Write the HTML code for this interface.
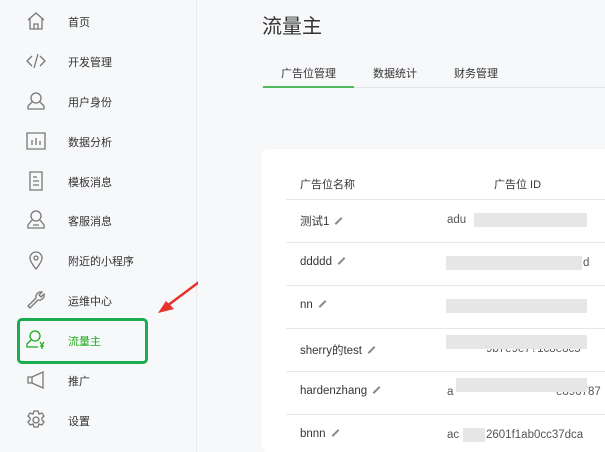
<!DOCTYPE html>
<html><head><meta charset="utf-8"><style>
*{margin:0;padding:0;box-sizing:border-box}
html,body{width:605px;height:452px;overflow:hidden}
body{background:#f7f8fa;font-family:"Liberation Sans","Noto Sans CJK SC",sans-serif;position:relative;color:#353535}
.side{position:absolute;left:0;top:0;width:197px;height:452px;background:#f7f8fa;border-right:1px solid #e9eaec}
.it{position:absolute;left:0;height:20px;width:190px;font-size:11px;color:#333}
.it svg{position:absolute;left:26px;top:0;width:20px;height:20px;fill:none;stroke:#777;stroke-width:1.3}
.it span{position:absolute;left:68px;top:3px}
.box{position:absolute;left:17px;top:318px;width:131px;height:46px;border:3px solid #1aad4f;border-radius:5px}
.main{position:absolute;left:198px;top:0;width:407px;height:452px;background:#f7f8fa;overflow:hidden}
h1{position:absolute;left:64px;top:10px;font-size:20px;font-weight:normal;color:#333}
.tabs{position:absolute;left:64px;top:86px;width:360px;border-bottom:1px solid #e4e6e8;height:2px}
.tab{position:absolute;top:65px;font-size:11px;color:#353535}
.ul{position:absolute;left:65px;top:86px;width:91px;height:2px;background:#52b95e}
.card{position:absolute;left:64px;top:149px;width:360px;height:303px;background:#fff;border-radius:5px}
.row{position:absolute;left:24px;width:320px;border-top:1px solid #e7e7e7;height:43px}
.row .n{position:absolute;left:14px;top:13px;font-size:11.5px;color:#353535}
.row .i{position:absolute;left:161px;top:14px;font-size:11.5px;color:#555}
.bl{position:absolute;top:13px;height:14px;background:#e6e6e6}
.pen{display:inline-block;width:9px;height:2px;background:#888;transform:rotate(-45deg);margin-left:5px;vertical-align:3px}
</style></head><body>
<div class="side">
<div class="it" style="top:11px"><svg viewBox="0 0 20 20"><path d="M2 9L10 2l8 7M4 7v11h12V7M8 18v-5h4v5"/></svg><span>首页</span></div>
<div class="it" style="top:51px"><svg viewBox="0 0 20 20"><path d="M6 5L1 10l5 5M14 5l5 5-5 5M12 3L8 17"/></svg><span>开发管理</span></div>
<div class="it" style="top:91px"><svg viewBox="0 0 20 20"><circle cx="10" cy="7" r="5"/><path d="M6 11L2 15v3h16v-3l-4-4"/></svg><span>用户身份</span></div>
<div class="it" style="top:131px"><svg viewBox="0 0 20 20"><path d="M1 2h18v16H1zM6 14V9M10 14V7M14 14v-4"/></svg><span>数据分析</span></div>
<div class="it" style="top:171px"><svg viewBox="0 0 20 20"><path d="M4 1h12v18H4zM7 6h4M7 10h6M7 14h6"/></svg><span>模板消息</span></div>
<div class="it" style="top:210px"><svg viewBox="0 0 20 20"><circle cx="10" cy="6" r="5"/><path d="M6 10L2 15v3h16v-3l-4-5M7 15h6"/></svg><span>客服消息</span></div>
<div class="it" style="top:250px"><svg viewBox="0 0 20 20"><path d="M10 19s-6-7-6-11a6 6 0 0112 0c0 4-6 11-6 11z"/><circle cx="10" cy="8" r="2"/></svg><span>附近的小程序</span></div>
<div class="it" style="top:290px"><svg viewBox="0 0 20 20"><path d="M2 16l8-8a5 5 0 016-6l-3 3 2 2 3-3a5 5 0 01-6 6l-8 8z"/></svg><span>运维中心</span></div>
<div class="it" style="top:330px"><svg viewBox="0 0 20 20" style="stroke:#1aad19"><circle cx="9" cy="6" r="5"/><path d="M5 10L1 14v3h11M14 12l2 3 2-3M16 15v4M14 16h4"/></svg><span style="color:#1aad19">流量主</span></div>
<div class="it" style="top:370px"><svg viewBox="0 0 20 20"><path d="M2 7h4l11-5v16L6 13H2zM6 7v6"/></svg><span>推广</span></div>
<div class="it" style="top:410px"><svg viewBox="0 0 20 20"><circle cx="10" cy="10" r="3"/><path d="M8 1h4l1 3 3-1 2 3-2 2 0 2 2 2-2 3-3-1-1 3H8l-1-3-3 1-2-3 2-2V8L2 6l2-3 3 1z"/></svg><span>设置</span></div>
<div class="box"></div>
</div>
<svg style="position:absolute;left:150px;top:275px" width="60" height="45"><path d="M53 4L13 34" stroke="#e8312a" stroke-width="2.5"/><path d="M8 38l16-4-8-8z" fill="#e8312a"/></svg>
<div class="main">
<h1>流量主</h1>
<div class="tabs"></div><div class="ul"></div>
<div class="tab" style="left:83px">广告位管理</div>
<div class="tab" style="left:175px">数据统计</div>
<div class="tab" style="left:256px">财务管理</div>
<div class="card">
<div style="position:absolute;left:38px;top:27px;font-size:11px">广告位名称</div>
<div style="position:absolute;left:232px;top:27px;font-size:11px">广告位 ID</div>
<div class="row" style="top:50px"><span class="n">测试1<i class="pen"></i></span><span class="i">adu</span><div class="bl" style="left:188px;width:113px"></div></div>
<div class="row" style="top:93px"><div class="bl" style="left:160px;width:136px"></div><span class="n">ddddd<i class="pen"></i></span><span class="i" style="left:297px">d</span></div>
<div class="row" style="top:136px"><span class="n">nn<i class="pen"></i></span><div class="bl" style="left:160px;width:141px"></div></div>
<div class="row" style="top:179px"><span class="n">sherry的test<i class="pen"></i></span><span class="i" style="left:200px">9b7e9e7?1c8e8c5</span><div class="bl" style="left:160px;width:141px;top:6px;height:14px"></div></div>
<div class="row" style="top:222px"><span class="n">hardenzhang<i class="pen"></i></span><span class="i">a</span><span class="i" style="left:270px">e896787</span><div class="bl" style="left:170px;width:131px;top:6px;height:14px"></div></div>
<div class="row" style="top:265px"><span class="n">bnnn<i class="pen"></i></span><span class="i">ac</span><div class="bl" style="left:177px;width:22px"></div><span class="i" style="left:200px">2601f1ab0cc37dca</span></div>
</div>
</div>
</body></html>
